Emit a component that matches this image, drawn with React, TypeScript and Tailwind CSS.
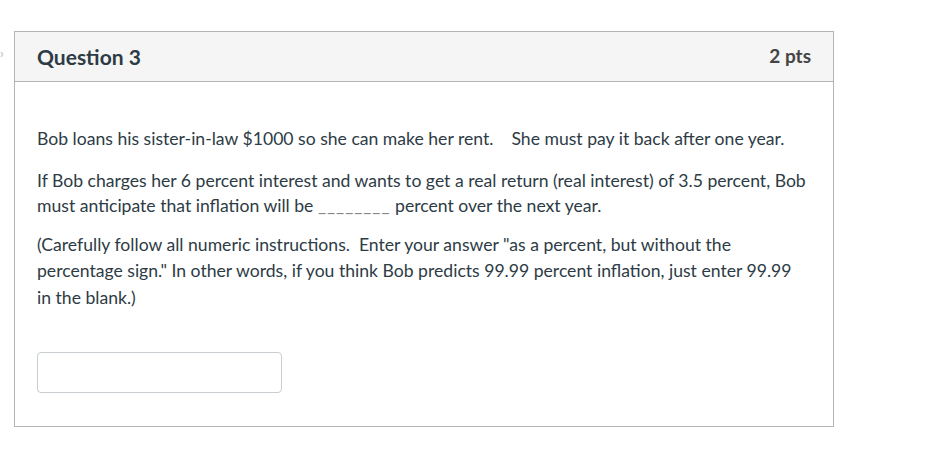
export default function App() {
  return (
    <div className="relative w-[946px] h-[467px] bg-white pt-[31px] pl-[14px] text-[#2d3b45] font-['Lato',sans-serif]">
      {/* collapse chevron at left edge */}
      <span className="absolute left-[0px] top-[47px] text-[13px] text-[#b0b7bd] leading-none">›</span>

      <div className="w-[820px] border border-[#b4b4b4]">
        {/* Header */}
        <div className="h-[50px] bg-[#f5f5f5] border-b border-[#b4b4b4] px-[22px] flex items-center justify-between">
          <h2 className="text-[21px] font-bold">Question 3</h2>
          <span className="text-[19px] font-bold text-[#444]">2 pts</span>
        </div>

        {/* Body */}
        <div className="pl-[22px] pr-[27px] pt-[44px] pb-[33px] text-[17.6px] leading-[25.5px]">
          <p>
            Bob loans his sister-in-law $1000 so she can make her rent.&nbsp;&nbsp;&nbsp; She must pay it back after one year.
          </p>
          <p className="mt-[16px]">
            If Bob charges her 6 percent interest and wants to get a real return (real interest) of 3.5 percent, Bob must
            anticipate that inflation will be <span className="text-[#888] tracking-[1px]">________</span> percent over the next year.
          </p>
          <p className="mt-[13px] leading-[26.5px]">
            (Carefully follow all numeric instructions.&nbsp; Enter your answer "as a percent, but without the percentage
            sign." In other words, if you think Bob predicts 99.99 percent inflation, just enter 99.99 in the blank.)
          </p>
          <input
            type="text"
            className="mt-[41px] block w-[245px] h-[41px] rounded-[4px] border border-[#c7cdd1] bg-white outline-none"
          />
        </div>
      </div>
    </div>
  )
}
